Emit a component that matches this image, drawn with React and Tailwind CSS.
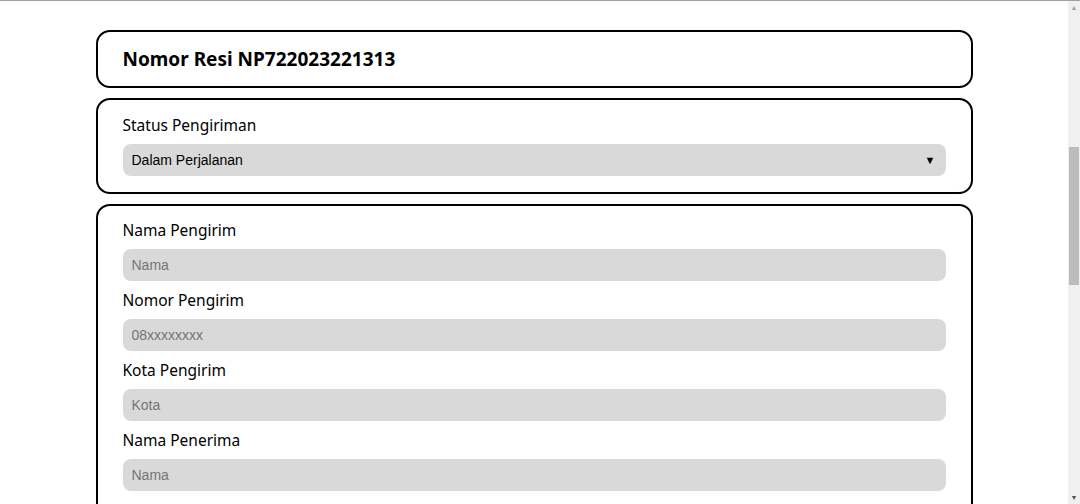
import React from "react";

const fields = [
  { label: "Nama Pengirim", placeholder: "Nama" },
  { label: "Nomor Pengirim", placeholder: "08xxxxxxxx" },
  { label: "Kota Pengirim", placeholder: "Kota" },
  { label: "Nama Penerima", placeholder: "Nama" },
  { label: "Nomor Penerima", placeholder: "08xxxxxxxx" },
  { label: "Kota Penerima", placeholder: "Kota" },
];

const labelFont = { fontFamily: '"Noto Sans", sans-serif' };

function Field({ label, placeholder }) {
  return (
    <div className="flex flex-col">
      <label className="text-[15.5px] leading-[22px] text-black my-[8px]" style={labelFont}>
        {label}
      </label>
      <input
        className="h-[32px] w-full rounded-[8px] bg-[#d9d9d9] px-[9px] text-[14px] text-black outline-none placeholder:text-[#757575] font-['Liberation_Sans',Arial,sans-serif]"
        placeholder={placeholder}
      />
    </div>
  );
}

export default function App() {
  return (
    <div className="flex h-[504px] w-[1080px] overflow-hidden border-t border-[#a0a0a0] bg-white">
      <main className="flex-1 pt-[29px]">
        <div className="mx-auto flex w-[877px] flex-col">
          {/* Nomor resi */}
          <div className="flex h-[58px] items-center rounded-[14px] border-2 border-black px-[25px]">
            <h1 className="text-[19px] font-bold text-black" style={labelFont}>
              Nomor Resi NP722023221313
            </h1>
          </div>

          {/* Status */}
          <div className="mt-[10px] rounded-[14px] border-2 border-black px-[25px] pb-[16px] pt-[6px]">
            <div className="flex flex-col">
              <label className="my-[8px] text-[15.5px] leading-[22px] text-black" style={labelFont}>
                Status Pengiriman
              </label>
              <div className="flex h-[32px] items-center justify-between rounded-[8px] bg-[#d9d9d9] pl-[9px] pr-[10px] text-[14px] text-black font-['Liberation_Sans',Arial,sans-serif]">
                <span>Dalam Perjalanan</span>
                <span className="text-[11px]">▼</span>
              </div>
            </div>
          </div>

          {/* Data pengirim & penerima */}
          <div className="mt-[10px] rounded-[14px] border-2 border-black px-[25px] pb-[15px] pt-[5px]">
            {fields.map((f, i) => (
              <Field key={i} label={f.label} placeholder={f.placeholder} />
            ))}
          </div>
        </div>
      </main>

      {/* scrollbar */}
      <div className="flex w-[12px] flex-col items-center bg-[#f0f0f0]">
        <span className="mt-[3px] text-[7px] leading-[8px] text-[#a3a3a3]">▲</span>
        <div className="mt-[135px] h-[138px] w-[10px] bg-[#bcbcbc]" />
        <div className="flex-1" />
        <span className="mb-[2px] text-[7px] leading-[8px] text-[#505050]">▼</span>
      </div>
    </div>
  );
}
